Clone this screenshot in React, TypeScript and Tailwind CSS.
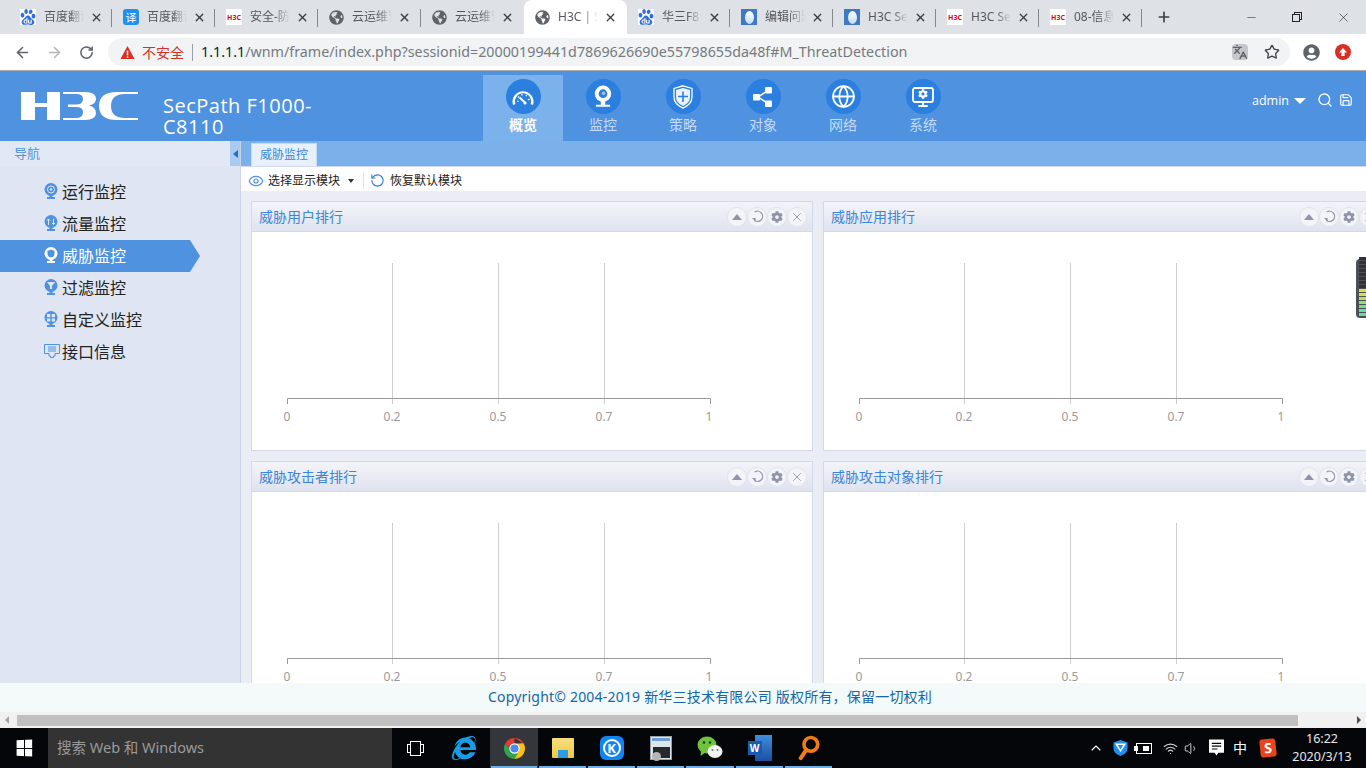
import { ArrowLeft, ArrowRight, ChevronUp, Globe, Monitor, RotateCw, Search, Save, Star, X, Plus, Minus, Eye, Wifi, Volume1, Languages } from "lucide-react";
import { SiBaidu } from "react-icons/si";
import { FaGlobeAmericas, FaUserCircle, FaInternetExplorer, FaCog } from "react-icons/fa";

const cjk = "font-['Noto_Sans','Noto_Sans_CJK_SC',sans-serif]";

const tabs = [
  { icon: "baidu", title: "百度翻译" },
  { icon: "yi", title: "百度翻译" },
  { icon: "h3c", title: "安全-防火" },
  { icon: "globe", title: "云运维管" },
  { icon: "globe", title: "云运维管" },
  { icon: "globe", title: "H3C | Se", active: true },
  { icon: "baidu", title: "华三F8" },
  { icon: "drop", title: "编辑问题" },
  { icon: "drop", title: "H3C Sec" },
  { icon: "h3c", title: "H3C Sec" },
  { icon: "h3c", title: "08-信息" },
];

function Favicon({ kind }: { kind: string }) {
  if (kind === "baidu") return <span className="flex h-4 w-4 items-center justify-center bg-white"><SiBaidu className="h-4 w-4 text-[#2f6fe0]" /></span>;
  if (kind === "yi") return <span className="flex h-4 w-4 items-center justify-center rounded-[3px] bg-[#1e90f0] text-[11px] leading-none text-white">译</span>;
  if (kind === "h3c") return <span className="flex h-4 w-4 items-center justify-center bg-white text-[7px] font-bold leading-none text-[#e60012]">H3C</span>;
  if (kind === "drop") {
    return (
      <span className="flex h-4 w-4 items-center justify-center bg-[#3f79c6]">
        <span className="h-[13px] w-[9px] rounded-[50%] bg-gradient-to-b from-[#ffffff] to-[#c6dcf5]" />
      </span>
    );
  }
  return <FaGlobeAmericas className="h-[15px] w-[15px] text-[#5f6368]" />;
}

function TabStrip() {
  return (
    <div className="flex h-[34px] items-end bg-[#dee1e6] pl-[9px]">
      {tabs.map((t, i) => {
        const hideSep = t.active || tabs[i + 1]?.active;
        return (
          <div key={i} className={`relative flex h-[34px] w-[103px] items-center pl-[11px] ${t.active ? "rounded-t-lg bg-white" : ""}`}>
            <Favicon kind={t.icon} />
            <span className="ml-2 w-[40px] overflow-hidden whitespace-nowrap text-[12px] text-[#55585c] [mask-image:linear-gradient(to_right,black_62%,transparent)]">{t.title}</span>
            <X className="ml-[6px] h-[13px] w-[13px] text-[#3c4043]" strokeWidth={2.5} />
            {!hideSep && <span className="absolute right-0 top-[9px] h-[18px] w-px bg-[#85888c]" />}
          </div>
        );
      })}
      <Plus className="mb-[9px] ml-[14px] h-[16px] w-[16px] text-[#3c4043]" strokeWidth={2.5} />
      <div className="ml-auto flex h-[34px] items-center">
        <div className="flex w-[46px] justify-center"><Minus className="h-[13px] w-[13px] text-[#222]" strokeWidth={1} /></div>
        <div className="flex w-[46px] justify-center">
          <span className="relative h-[10px] w-[10px]">
            <span className="absolute right-0 top-0 h-[8px] w-[8px] border border-[#222]" />
            <span className="absolute bottom-0 left-0 h-[8px] w-[8px] border border-[#222] bg-[#dee1e6]" />
          </span>
        </div>
        <div className="flex w-[46px] justify-center"><X className="h-[15px] w-[15px] text-[#222]" strokeWidth={1} /></div>
      </div>
    </div>
  );
}

function AddressBar() {
  return (
    <div className="flex h-[37px] items-center border-b border-[#a9a9a9] bg-white">
      <ArrowLeft className="ml-[14px] h-[17px] w-[17px] text-[#5f6368]" strokeWidth={2.2} />
      <ArrowRight className="ml-[15px] h-[17px] w-[17px] text-[#b5b7ba]" strokeWidth={2.2} />
      <RotateCw className="ml-[16px] h-[15px] w-[15px] text-[#5f6368]" strokeWidth={2.4} />
      <div className="ml-[14px] flex h-[28px] w-[1182px] items-center rounded-full bg-[#f1f3f4] pl-[12px] text-[14px]">
        <svg viewBox="0 0 16 16" className="h-[15px] w-[15px]"><path d="M8 1 L15.5 15 H.5 Z" fill="#d93025" /><rect x="7.2" y="6" width="1.6" height="5" fill="#fff" /><rect x="7.2" y="12" width="1.6" height="1.6" fill="#fff" /></svg>
        <span className="ml-[7px] text-[#d93025]">不安全</span>
        <span className="mx-[8px] h-[17px] w-px bg-[#9aa0a6]" />
        <span className="whitespace-nowrap text-[14.3px] text-[#767a80]"><span className="text-[#202124]">1.1.1.1</span>/wnm/frame/index.php?sessionid=20000199441d7869626690e55798655da48f#M_ThreatDetection</span>
        <Languages className="ml-auto h-[16px] w-[16px] rounded-sm bg-[#c4c7cb] text-[#5f6368]" />
        <Star className="ml-[16px] mr-[10px] h-[16px] w-[16px] text-[#3c4043]" strokeWidth={2} />
      </div>
      <FaUserCircle className="ml-[13px] h-[17px] w-[17px] text-[#5f6368]" />
      <span className="ml-[15px] flex h-[16px] w-[16px] items-center justify-center rounded-full bg-[#d93025]">
        <svg viewBox="0 0 10 10" className="h-[10px] w-[10px]"><path d="M5 1 L9 5.4 H6.6 V9 H3.4 V5.4 H1 Z" fill="#fff" /></svg>
      </span>
    </div>
  );
}

function H3CLogo() {
  return (
    <svg viewBox="0 0 117 28" className="h-[28px] w-[117px]">
      <g fill="#fff">
        <path d="M0 0 H14 V11 H26 V0 H39 V28 H26 V15 H14 V28 H0 Z" />
        <path d="M42 0 H64 Q75 0 75 7 Q75 12 68 13.5 Q75 15 75 21 Q75 28 64 28 H42 V26 H55 Q62 26 62 20 Q62 15 55 15 H47 V12.5 H55 Q62 12.5 62 7 Q62 2 55 2 H42 Z" />
        <path d="M117 0 V2 H104 Q90 2 90 14 Q90 26 104 26 H117 V28 H96 Q78 28 78 14 Q78 0 96 0 Z" />
      </g>
    </svg>
  );
}

function GaugeGlyph() {
  return (
    <svg viewBox="0 0 24 20" className="h-[20px] w-[24px]" fill="none" stroke="#fff">
      <path d="M2 18 A10.5 10.5 0 1 1 22 18 L19.5 17 A8 8 0 1 0 4.5 17 Z" fill="#fff" stroke="none" />
      <path d="M6 14 L7.5 14.5 M7 9.5 L8 10.5 M11 7 V8.5 M15.5 8 L15 9.3 M18.5 12 L17 13" strokeWidth="1.3" />
      <path d="M8.5 10.5 L14 15.5" strokeWidth="2" />
      <circle cx="14" cy="16" r="1.6" fill="#fff" stroke="none" />
    </svg>
  );
}

function ShieldGlyph() {
  return (
    <svg viewBox="0 0 20 24" className="h-[24px] w-[20px]">
      <path d="M10 .8 L19 3.5 V12 Q19 19 10 23.2 Q1 19 1 12 V3.5 Z" fill="none" stroke="#fff" strokeWidth="1.3" />
      <path d="M10 3 L17 5 V12 Q17 18 10 21 Q3 18 3 12 V5 Z" fill="#eaf3fd" />
      <path d="M10 6.5 V17 M5 11.5 H15" stroke="#2b7fdf" strokeWidth="1.6" />
    </svg>
  );
}

function WebcamGlyph({ className }: { className?: string }) {
  return (
    <svg viewBox="0 0 20 22" className={className}>
      <circle cx="10" cy="8" r="7.5" fill="#fff" />
      <circle cx="10" cy="8" r="4" fill="#2b7fdf" />
      <circle cx="10.5" cy="7.5" r="1.6" fill="#9cc6f3" />
      <path d="M8 15 V18 H3.5 V20 H16.5 V18 H12 V15 Z" fill="#fff" />
    </svg>
  );
}

const navItems = [
  { label: "概览", icon: <GaugeGlyph />, active: true },
  { label: "监控", icon: <WebcamGlyph className="h-[24px] w-[22px]" /> },
  { label: "策略", icon: <ShieldGlyph /> },
  {
    label: "对象",
    icon: (
      <svg viewBox="0 0 22 22" className="h-[22px] w-[22px]">
        <path d="M6 11 L16 4.5 M6 11 L16 17.5" stroke="#fff" strokeWidth="1.5" />
        <rect x="1" y="8" width="7" height="6.5" rx="1" fill="#fff" />
        <rect x="13" y="1" width="7" height="6.5" rx="1" fill="#fff" />
        <rect x="13" y="14.5" width="7" height="6.5" rx="1" fill="#fff" />
      </svg>
    ),
  },
  { label: "网络", icon: <Globe className="h-[25px] w-[25px] text-white" strokeWidth={1.7} /> },
  {
    label: "系统",
    icon: (
      <span className="relative flex h-[24px] w-[24px] items-center justify-center">
        <Monitor className="h-[24px] w-[24px] text-white" strokeWidth={1.8} />
        <FaCog className="absolute top-[4px] h-[10px] w-[10px] text-white" />
      </span>
    ),
  },
];

function Header() {
  return (
    <div className="flex h-[70px] shrink-0 bg-[#4f92e0] text-white">
      <div className="flex w-[163px] items-center pb-[1px] pl-[21px]"><H3CLogo /></div>
      <div className="w-[320px] pt-[24px] text-[20px] leading-[21px] tracking-[0.5px] font-['Open_Sans',sans-serif]">SecPath F1000-<br />C8110</div>
      <div className="flex pt-[4px]">
        {navItems.map((n) => (
          <div key={n.label} className={`flex h-[66px] w-[80px] flex-col items-center pt-[4px] ${n.active ? "bg-[#7cb2ec]" : ""}`}>
            <div className="flex h-[35px] w-[35px] items-center justify-center rounded-full bg-[#2b7fdf]">{n.icon}</div>
            <span className={`mt-[1px] text-[14px] leading-[20px] ${n.active ? "font-bold text-white" : "text-[#c4daf6]"}`}>{n.label}</span>
          </div>
        ))}
      </div>
      <div className="ml-auto flex items-start pr-[13px] pt-[21px]">
        <span className="text-[12.5px] leading-[17px] font-['Open_Sans',sans-serif]">admin</span>
        <span className="ml-[5px] mt-[6px] h-0 w-0 border-x-[6px] border-t-[6px] border-x-transparent border-t-white" />
        <Search className="ml-[11px] h-[16px] w-[16px]" strokeWidth={2} />
        <Save className="ml-[6px] mt-[1px] h-[14px] w-[14px]" strokeWidth={2} />
      </div>
    </div>
  );
}

const sideItems = [
  { label: "运行监控", inner: "play" },
  { label: "流量监控", inner: "flow" },
  { label: "威胁监控", inner: "shield", active: true },
  { label: "过滤监控", inner: "filter" },
  { label: "自定义监控", inner: "grid" },
  { label: "接口信息", inner: "port" },
];

function SideIcon({ inner, active }: { inner: string; active?: boolean }) {
  const fg = active ? "#fff" : "#4f92e0";
  const bg = active ? "#4f92e0" : "#dfe5f2";
  if (inner === "port") {
    return (
      <svg viewBox="0 0 16 14" className="h-[14px] w-[16px]">
        <path d="M.5 .5 H15.5 V9.5 H11 V12 H9.5 V13.5 H6.5 V12 H5 V9.5 H.5 Z" fill="none" stroke={fg} />
        <path d="M4 3 H12 M4 5 H12 M4 7 H12" stroke={fg} />
      </svg>
    );
  }
  return (
    <svg viewBox="0 0 14 16" className="h-[16px] w-[14px]">
      <circle cx="7" cy="6.5" r="6.5" fill={fg} />
      <rect x="3" y="14" width="8" height="2" fill={fg} />
      <rect x="5.5" y="12" width="3" height="2" fill={fg} />
      {inner === "play" && <circle cx="7" cy="6.5" r="3.5" fill="none" stroke={bg} />}
      {inner === "play" && <circle cx="7" cy="6.5" r="1.2" fill={bg} />}
      {inner === "flow" && <path d="M4.5 10 V4 M3 5.5 L4.5 4 L6 5.5 M9.5 3.5 V9.5 M8 8 L9.5 9.5 L11 8" stroke={bg} fill="none" />}
      {inner === "shield" && <path d="M7 2.5 L10.5 4 V7 Q10.5 9.5 7 10.5 Q3.5 9.5 3.5 7 V4 Z" fill={bg} />}
      {inner === "filter" && <path d="M3 3 H11 L8 7 V10 H6 V7 Z" fill={bg} />}
      {inner === "grid" && <path d="M3 3 H6.3 V6.2 H3 Z M7.7 3 H11 V6.2 H7.7 Z M3 7.6 H6.3 V10.5 H3 Z M7.7 7.6 H11 V10.5 H7.7 Z" fill={bg} />}
    </svg>
  );
}

function Sidebar() {
  return (
    <div className="w-[241px] shrink-0 border-r border-[#ccd3e8] bg-[#dfe5f2]">
      <div className="flex h-[25px] bg-[#e1e9f7]">
        <span className="flex-1 pl-[14px] text-[13px] leading-[25px] text-[#4f92e0]">导航</span>
        <span className="flex w-[10px] items-center justify-center bg-[#a9cbf1]">
          <span className="h-0 w-0 border-y-[4px] border-r-[5px] border-y-transparent border-r-[#1f6fc9]" />
        </span>
      </div>
      <div className="pt-[10px]">
        {sideItems.map((s) => (
          <div
            key={s.label}
            className={`flex h-[32px] w-[200px] items-center pl-[44px] text-[16px] ${s.active ? "bg-[#4f92e0] text-white [clip-path:polygon(0_0,190px_0,200px_50%,190px_100%,0_100%)]" : "text-[#222]"}`}
          >
            <span className="flex w-[18px] -translate-y-[1px]"><SideIcon inner={s.inner} active={s.active} /></span>
            <span>{s.label}</span>
          </div>
        ))}
      </div>
    </div>
  );
}

function CardButton({ children }: { children: React.ReactNode }) {
  return <span className="flex h-[20px] w-[20px] items-center justify-center rounded-full border border-[#e2e4ec] bg-[#f3f4f8] text-[#8f94aa]">{children}</span>;
}

function ReloadGlyph() {
  return (
    <svg viewBox="0 0 14 14" className="h-[13px] w-[13px]" fill="none" stroke="#8f94aa" strokeWidth="1.3">
      <path d="M4 2.2 A5.5 5.5 0 1 1 3.5 11" />
      <path d="M1 8.5 H5 V12.5 Z" fill="#8f94aa" stroke="none" />
    </svg>
  );
}

function Chart() {
  const xs = [36, 140.5, 246.5, 352.5, 459];
  const labelX = [35, 140, 246, 352, 457];
  const labels = ["0", "0.2", "0.5", "0.7", "1"];
  return (
    <svg width="560" height="218" className="block">
      {xs.slice(1, 4).map((x) => (
        <line key={x} x1={x} x2={x} y1="31" y2="172" stroke="#cfcfcf" strokeWidth="1" />
      ))}
      <path d="M35.5 172 V166.5 H458.5 V172" fill="none" stroke="#999" />
      {labels.map((l, i) => (
        <text key={i} x={labelX[i]} y="189" textAnchor="middle" fontSize="12" fill="#999" fontFamily="'Noto Sans', sans-serif">{l}</text>
      ))}
    </svg>
  );
}

function Card({ title }: { title: string }) {
  return (
    <div className="h-[250px] w-[562px] shrink-0 border border-[#d3d8ee] bg-white">
      <div className="flex h-[30px] items-center border-b border-[#d3d8e6] bg-gradient-to-b from-[#f3f4f9] to-[#dfe3ef] pl-[7px] pr-[5px]">
        <span className="text-[14px] text-[#3c85d8]">{title}</span>
        <div className="ml-auto flex">
          <CardButton><span className="h-0 w-0 border-x-[5px] border-b-[6px] border-x-transparent border-b-[#8f94aa]" /></CardButton>
          <CardButton><ReloadGlyph /></CardButton>
          <CardButton><FaCog className="h-[12px] w-[12px]" /></CardButton>
          <CardButton><X className="h-[14px] w-[14px]" strokeWidth={1.5} /></CardButton>
        </div>
      </div>
      <Chart />
    </div>
  );
}

function Main() {
  return (
    <div className="relative flex min-w-0 flex-1 flex-col overflow-hidden bg-[#ebedf4]">
      <div className="flex h-[25px] shrink-0 items-end bg-[#7ab1ea] pl-[10px]">
        <span className="flex h-[23px] w-[66px] items-center justify-center border border-b-0 border-[#c5dcf5] bg-[#e8f1fb] text-[12px] text-[#3c85d8]">威胁监控</span>
      </div>
      <div className="flex h-[25px] shrink-0 items-center border-t border-[#d3d8ee] bg-white pl-[7px] pt-[3px] text-[12px] text-[#222]">
        <Eye className="h-[16px] w-[16px] text-[#4f92e0]" strokeWidth={1.8} />
        <span className="ml-[4px]">选择显示模块</span>
        <span className="ml-[8px] h-0 w-0 border-x-[3px] border-t-[4px] border-x-transparent border-t-[#333]" />
        <span className="ml-[9px] h-[16px] w-px bg-[#e0e0e0]" />
        <RotateCw className="ml-[6px] h-[15px] w-[15px] -scale-x-100 text-[#2f7fd8]" strokeWidth={1.8} />
        <span className="ml-[5px]">恢复默认模块</span>
      </div>
      <div className="grid grid-cols-[562px_562px] gap-[10px] pl-[10px] pt-[10px]">
        <Card title="威胁用户排行" />
        <Card title="威胁应用排行" />
        <Card title="威胁攻击者排行" />
        <Card title="威胁攻击对象排行" />
      </div>
      {/* extension overlay stuck to the right edge */}
      <div className="absolute right-0 top-[118px] flex h-[59px] w-[10px] flex-col justify-end gap-px rounded-l bg-[#4e5058] py-[2px] pl-[3px]">
        {["#333", "#333", "#333", "#333", "#333", "#333", "#333", "#333", "#d6e04a", "#d6e04a", "#b6e05a", "#8ee070", "#6fe08a", "#5fe09a", "#5fe0a0"].map((c, i) => (
          <span key={i} className="h-[3px] w-[7px] shrink-0" style={{ backgroundColor: c }} />
        ))}
      </div>
    </div>
  );
}

function ChromeIcon() {
  return (
    <svg viewBox="0 0 24 24" className="h-[23px] w-[23px]">
      <path d="M12 1 A11 11 0 0 1 21.5 6.5 L12 7 Z M12 1 A11 11 0 0 0 2.5 6.5 L7.5 14.5 L12 7 H21.5 Z" fill="#e33b2e" />
      <path d="M2.5 6.5 A11 11 0 0 0 12 23 L16.5 14.5 L7.5 14.5 Z" fill="#2fa44f" />
      <path d="M21.5 6.5 A11 11 0 0 1 12 23 L16.5 14.5 L12 7 Z" fill="#fbc116" />
      <circle cx="12" cy="12" r="5.4" fill="#fff" />
      <circle cx="12" cy="12" r="4.2" fill="#4a8af4" />
    </svg>
  );
}

function TaskItem({ children, running, active, w = 48 }: { children: React.ReactNode; running?: boolean; active?: boolean; w?: number }) {
  return (
    <div className={`relative flex h-[40px] shrink-0 items-center justify-center ${active ? "bg-[#33363a]" : ""}`} style={{ width: w }}>
      {children}
      {running && <span className="absolute bottom-0 left-[1px] right-[1px] h-[2px] bg-[#6cb0e8]" />}
    </div>
  );
}

function Taskbar() {
  return (
    <div className="flex h-[40px] shrink-0 items-center bg-[#04060a] text-white">
      <div className="flex h-[40px] w-[48px] items-center justify-center">
        <span className="grid h-[16px] w-[16px] grid-cols-2 gap-[1px] [transform:perspective(40px)_rotateY(-14deg)]">
          <span className="bg-white" /><span className="bg-white" /><span className="bg-white" /><span className="bg-white" />
        </span>
      </div>
      <div className="flex h-[40px] w-[344px] items-center bg-[#333333] pl-[9px] text-[14.5px] text-[#9a9a9a]">搜索 Web 和 Windows</div>
      <TaskItem w={46}><span className="relative h-[15px] w-[11px] border border-white"><span className="absolute -left-[4px] top-[2px] h-[9px] w-[3px] border-y border-l border-white" /><span className="absolute -right-[4px] top-[2px] h-[9px] w-[3px] border-y border-r border-white" /></span></TaskItem>
      <TaskItem w={52}>
        <FaInternetExplorer className="h-[24px] w-[24px] text-[#1a9be6]" />
      </TaskItem>
      <TaskItem active running w={48}><ChromeIcon /></TaskItem>
      <TaskItem running w={49}>
        <span className="relative h-[20px] w-[22px] rounded-[1px] bg-gradient-to-b from-[#f7df7e] to-[#f0c93a]"><span className="absolute bottom-0 left-[6px] h-[8px] w-[10px] bg-[#2f9be6]" /></span>
      </TaskItem>
      <TaskItem running w={49}>
        <span className="flex h-[24px] w-[24px] items-center justify-center rounded-[6px] bg-[#1384f4] text-[13px] font-bold leading-none"><span className="flex h-[18px] w-[18px] items-center justify-center rounded-full border-2 border-white">K</span></span>
      </TaskItem>
      <TaskItem running w={49}>
        <span className="relative block h-[24px] w-[22px] border border-[#9aa0a6] bg-[#dfe5ec]"><span className="absolute inset-x-[1px] top-[1px] h-[3px] bg-[#6a9fd8]" /><span className="absolute bottom-[1px] right-[1px] h-[11px] w-[17px] bg-[#26282c]" /><span className="absolute -bottom-[2px] left-[1px] h-[9px] w-[9px] rounded-full bg-[#b5b5b5]" /></span>
      </TaskItem>
      <TaskItem running w={50}>
        <svg viewBox="0 0 26 24" className="h-[24px] w-[26px]">
          <ellipse cx="10" cy="9" rx="9.5" ry="8.5" fill="#6fc23b" />
          <path d="M4 15 L3.5 20 L9 16 Z" fill="#6fc23b" />
          <circle cx="7" cy="6.5" r="1.2" fill="#0a3a0a" /><circle cx="13" cy="6.5" r="1.2" fill="#0a3a0a" />
          <ellipse cx="18" cy="15.5" rx="7.5" ry="6.5" fill="#f2f2f2" />
          <circle cx="15.5" cy="14" r="1" fill="#777" /><circle cx="20.5" cy="14" r="1" fill="#777" />
        </svg>
      </TaskItem>
      <TaskItem running w={49}>
        <span className="relative block h-[26px] w-[24px]"><span className="absolute right-0 top-0 h-full w-[17px] bg-gradient-to-b from-[#3f8fe0] to-[#1f4f9f]" /><span className="absolute left-0 top-[6px] flex h-[14px] w-[14px] items-center justify-center bg-[#1c5cb0] text-[10px] font-bold leading-none">W</span></span>
      </TaskItem>
      <TaskItem running w={49}>
        <svg viewBox="0 0 24 28" className="h-[26px] w-[22px]"><circle cx="14" cy="10" r="7.5" fill="none" stroke="#f07d12" strokeWidth="4" /><path d="M9 16 L3 25" stroke="#f07d12" strokeWidth="4.5" strokeLinecap="round" /></svg>
      </TaskItem>
      <div className="ml-auto flex items-center pr-[14px]">
        <ChevronUp className="h-[16px] w-[16px]" strokeWidth={1.6} />
        <svg viewBox="0 0 16 18" className="ml-[9px] h-[18px] w-[15px]"><path d="M8 .5 L15.5 3 V9 Q15.5 15 8 17.5 Q.5 15 .5 9 V3 Z" fill="#1f8ef1" /><path d="M3.5 5 H12.5 L8 12 Z" fill="none" stroke="#fff" strokeWidth="1.6" /></svg>
        <span className="relative ml-[8px] h-[11px] w-[16px] border border-white"><span className="absolute -left-[3px] top-[2px] h-[5px] w-[4px] bg-white" /><span className="absolute inset-y-[2px] right-[2px] w-[6px] bg-white" /></span>
        <Wifi className="ml-[11px] h-[15px] w-[15px] text-[#cfcfcf]" strokeWidth={1.8} />
        <Volume1 className="ml-[6px] h-[15px] w-[15px] text-[#dddddd]" strokeWidth={1.5} />
        <svg viewBox="0 0 16 18" className="ml-[10px] h-[18px] w-[15px]"><path d="M0 0 H16 V14 H10 L8 17 L6 14 H0 Z" fill="#fff" /><path d="M3 4 H13 M3 7 H13 M3 10 H9" stroke="#04060a" strokeWidth="1.2" /></svg>
        <span className="ml-[9px] text-[14px] leading-none">中</span>
        <span className="ml-[13px] flex h-[18px] w-[16px] -rotate-6 items-center justify-center rounded-[3px] bg-[#e8451f] text-[14px] font-bold leading-none">S</span>
        <div className="ml-[16px] flex w-[60px] flex-col items-center gap-[4px] text-[12.5px] leading-[14px] text-[#e8e8e8]">
          <span>16:22</span>
          <span>2020/3/13</span>
        </div>
      </div>
    </div>
  );
}

export default function App() {
  return (
    <div className={`flex h-[768px] w-[1366px] flex-col overflow-hidden bg-white ${cjk}`}>
      <TabStrip />
      <AddressBar />
      <Header />
      <div className="flex min-h-0 flex-1">
        <Sidebar />
        <Main />
      </div>
      <div className="relative z-10 flex h-[29px] shrink-0 items-center justify-center bg-[#f4fafa] pb-[2px] pl-[54px] text-[14px] tracking-[0.2px] text-[#1565a8]">
        Copyright© 2004-2019 新华三技术有限公司 版权所有，保留一切权利
      </div>
      <div className="flex h-[16px] shrink-0 items-center bg-[#f1f1f1]">
        <span className="ml-[5px] h-0 w-0 border-y-[4px] border-r-[4px] border-y-transparent border-r-[#a3a3a3]" />
        <span className="ml-[8px] h-[11px] w-[1281px] bg-[#c0c0c0]" />
        <span className="ml-auto mr-[5px] h-0 w-0 border-y-[4px] border-l-[4px] border-y-transparent border-l-[#505050]" />
      </div>
      <Taskbar />
    </div>
  );
}
